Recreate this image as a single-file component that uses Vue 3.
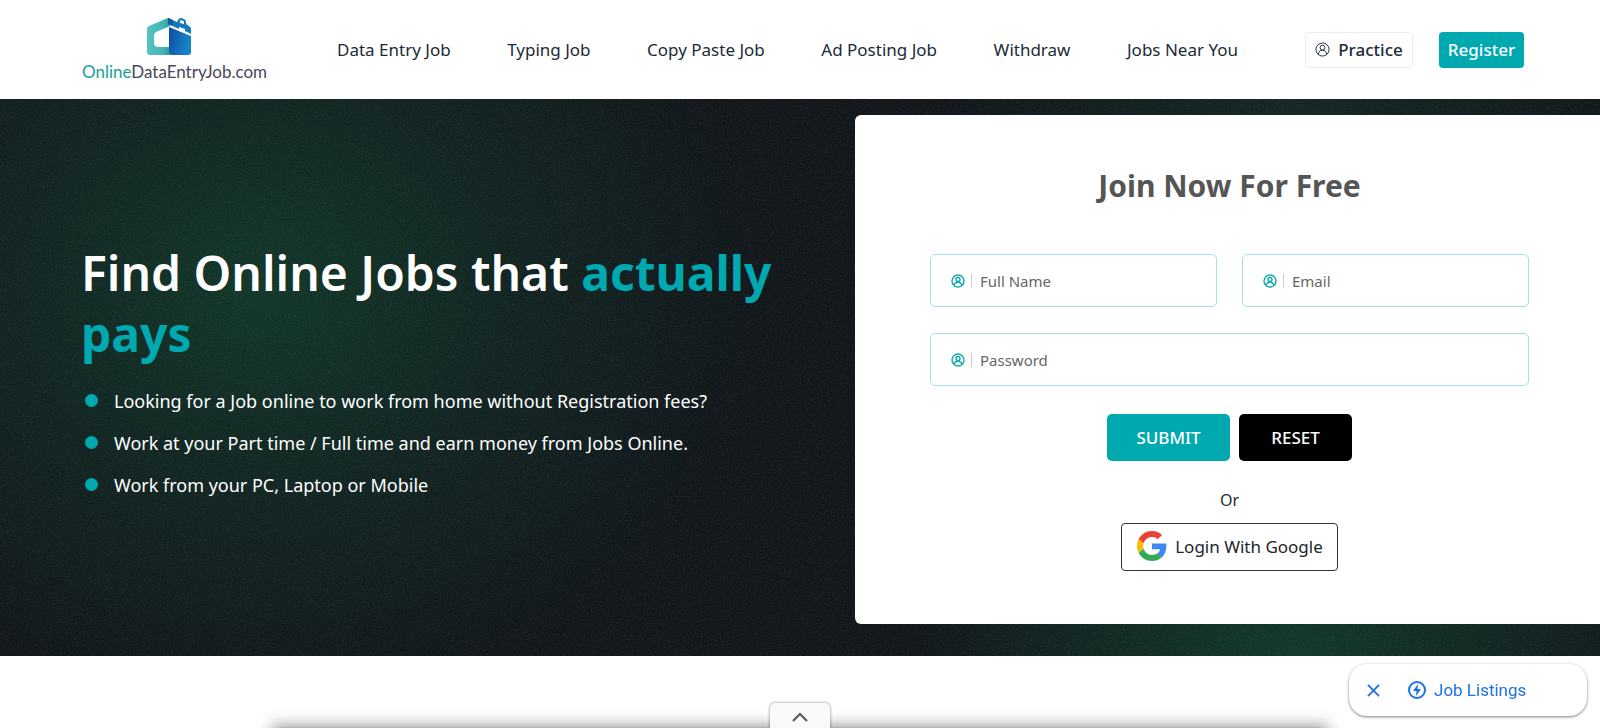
<script setup>
import { ref } from 'vue'

const navLinks = ['Data Entry Job', 'Typing Job', 'Copy Paste Job', 'Ad Posting Job', 'Withdraw', 'Jobs Near You']
const points = [
  'Looking for a Job online to work from home without Registration fees?',
  'Work at your Part time / Full time and earn money from Jobs Online.',
  'Work from your PC, Laptop or Mobile',
]
const fields = [
  { id: 'name', label: 'Full Name', type: 'text' },
  { id: 'email', label: 'Email', type: 'email' },
  { id: 'password', label: 'Password', type: 'password' },
]
const form = ref({ name: '', email: '', password: '' })
</script>

<template>
  <div class="page">
    <header class="header">
      <a class="logo" href="#">
        <svg class="logo-mark" viewBox="0 0 58 38" aria-hidden="true">
          <defs>
            <linearGradient id="teal" x1="0" y1="0" x2="1" y2="0">
              <stop offset="0" stop-color="#55c4c3" />
              <stop offset="0.7" stop-color="#43b3b3" />
              <stop offset="1" stop-color="#2c9a9e" />
            </linearGradient>
            <linearGradient id="blue" x1="0" y1="0" x2="1" y2="0.3">
              <stop offset="0" stop-color="#0b4da3" />
              <stop offset="0.4" stop-color="#1463b0" />
              <stop offset="1" stop-color="#1585c8" />
            </linearGradient>
          </defs>
          <path fill="url(#teal)" fill-rule="evenodd" d="M22 0 3 8Q1 9 1 11V34Q1 37 4 37H24V29H12Q8 29 8 25V18Q8 15 10 14L24 8V0Z" />
          <path fill="url(#blue)" d="M23 9 45 18V34Q45 37 42 37H26Q23 37 23 34Z" />
          <path fill="#1478bd" fill-rule="evenodd" d="M22 0 31 4 32 2Q33 0 35 0L38 1Q40 2 40 4V6L43 8Q45 9 45 11V16L39 13V11L33 9V11L22 6ZM34 5 38 6V4Q38 3 37 3L35 2Q34 2 34 3Z" />
          <path fill="#0f5cab" d="M22 0 27 2V8L22 6Z" />
          <path fill="#fff" d="M33 9 39 12V15L33 13Z" />
        </svg>
        <span class="logo-text"><span class="logo-accent">Online</span>DataEntryJob.com</span>
      </a>
      <nav class="nav">
        <a v-for="link in navLinks" :key="link" href="#">{{ link }}</a>
      </nav>
      <a class="practice" href="#">
        <svg viewBox="0 0 16 16" aria-hidden="true" fill="none" stroke="currentColor">
          <circle cx="8" cy="8" r="7" />
          <circle cx="8" cy="6" r="2.6" />
          <path d="M3.6 13C4 10 5.500 8.800 8 8.800s4 1.200 4.400 4.200" />
        </svg>
        Practice
      </a>
      <a class="register" href="#">Register</a>
    </header>

    <main class="hero">
      <svg class="grain" aria-hidden="true">
        <filter id="noise">
          <feTurbulence type="fractalNoise" baseFrequency="0.7" numOctaves="2" />
          <feColorMatrix values="0 0 0 0 0.6  0 0 0 0 0.7  0 0 0 0 0.7  1 0 0 0 -0.35" />
        </filter>
        <rect width="100%" height="100%" filter="url(#noise)" />
      </svg>
      <section class="intro">
        <h1>Find Online Jobs that <span>actually</span> <span>pays</span></h1>
        <ul>
          <li v-for="point in points" :key="point">{{ point }}</li>
        </ul>
      </section>
      <form class="card" @submit.prevent>
        <h2>Join Now For Free</h2>
        <div class="fields">
          <div v-for="field in fields" :key="field.id" class="field" :class="field.id">
            <label :for="field.id" :aria-label="field.label">
              <svg viewBox="0 0 14 14" aria-hidden="true" fill="none" stroke="currentColor" stroke-width="1.4">
                <circle cx="7" cy="7" r="6" />
                <circle cx="7" cy="5.500" r="2" />
                <path d="M3 11.500C3.500 9 5 8.300 7 8.300s3.500.7 4 3.200" />
              </svg>
            </label>
            <input :id="field.id" v-model="form[field.id]" :type="field.type" :placeholder="field.label" />
          </div>
        </div>
        <div class="actions">
          <button class="submit" type="submit">SUBMIT</button>
          <button class="reset" type="reset">RESET</button>
        </div>
        <p class="or">Or</p>
        <button class="google" type="button">
          <svg viewBox="0 0 48 48" aria-hidden="true">
            <path fill="#EA4335" d="M24 9.500c3.540 0 6.710 1.220 9.210 3.600l6.850-6.850C35.900 2.380 30.470 0 24 0 14.620 0 6.510 5.380 2.560 13.220l7.980 6.190C12.430 13.720 17.740 9.500 24 9.500z" />
            <path fill="#4285F4" d="M46.980 24.550c0-1.570-.15-3.090-.38-4.550H24v9.020h12.940c-.58 2.960-2.260 5.480-4.780 7.180l7.730 6c4.510-4.180 7.090-10.360 7.090-17.650z" />
            <path fill="#FBBC05" d="M10.530 28.590c-.48-1.450-.76-2.990-.76-4.590s.27-3.140.76-4.590l-7.980-6.190C.92 16.460 0 20.120 0 24c0 3.880.92 7.540 2.560 10.780l7.970-6.190z" />
            <path fill="#34A853" d="M24 48c6.480 0 11.930-2.130 15.890-5.810l-7.730-6c-2.150 1.450-4.920 2.300-8.160 2.300-6.260 0-11.570-4.220-13.470-9.910l-7.980 6.190C6.510 42.620 14.620 48 24 48z" />
          </svg>
          Login With Google
        </button>
      </form>
    </main>

    <section class="below">
      <div class="panel"></div>
    </section>

    <button class="expand" type="button" aria-label="Expand">
      <svg viewBox="0 0 18 10" aria-hidden="true"><path d="M2 9 9 2l7 7" fill="none" stroke="#555" stroke-width="2" /></svg>
    </button>
    <aside class="listings">
      <button type="button" aria-label="Close">
        <svg viewBox="0 0 14 14" aria-hidden="true"><path d="M1 1l12 12M13 1 1 13" fill="none" stroke="currentColor" stroke-width="2" /></svg>
      </button>
      <a href="#">
        <svg viewBox="0 0 18 18" aria-hidden="true">
          <circle cx="9" cy="9" r="8" fill="none" stroke="currentColor" stroke-width="2" />
          <path d="M10 3 5 10h3.500L8 15l5-7H9.500Z" fill="currentColor" />
        </svg>
        Job Listings
      </a>
    </aside>
  </div>
</template>

<style>
body {
  margin: 0;
}
</style>

<style scoped>
.page {
  min-height: 100vh;
  display: flex;
  flex-direction: column;
  background: #fff;
  color: #1b2a38;
  font-family: "Noto Sans", sans-serif;
}
a {
  color: inherit;
  text-decoration: none;
}
button {
  cursor: pointer;
  font-family: inherit;
}
.header {
  display: flex;
  align-items: center;
  height: 99px;
  padding: 0 76px 0 82px;
}
.logo {
  display: flex;
  flex-direction: column;
  align-items: center;
  gap: 6px;
  width: 185px;
}
.logo-mark {
  width: 58px;
  height: 38px;
}
.logo-text {
  font: 17px/20px Lato, sans-serif;
  color: #4a4558;
  white-space: nowrap;
}
.logo-accent {
  color: #1ba09d;
}
.nav {
  flex: 1;
  display: flex;
  justify-content: space-between;
  margin: 0 67px 0 70px;
  font-size: 17px;
  line-height: 24px;
  white-space: nowrap;
}
.practice,
.register {
  box-sizing: border-box;
  display: flex;
  align-items: center;
  justify-content: center;
  height: 36px;
  border-radius: 4px;
  font-size: 17px;
  font-weight: 500;
}
.practice {
  gap: 8px;
  width: 108px;
  margin-right: 26px;
  border: 1px solid #e6efef;
}
.practice svg {
  width: 15px;
  height: 15px;
}
.register {
  width: 85px;
  background: #00a8af;
  color: #fff;
}
.hero {
  position: relative;
  display: grid;
  grid-template-columns: 855fr 745fr;
  align-items: center;
  padding: 16px 0 32px;
  background:
    radial-gradient(ellipse 500px 420px at 260px 190px, rgba(17, 60, 42, 0.85), rgba(17, 52, 40, 0.5) 45%, transparent),
    radial-gradient(ellipse 380px 240px at 1290px 100%, rgba(17, 62, 44, 0.85), transparent),
    radial-gradient(ellipse 350px 300px at 1290px 0, rgba(20, 44, 38, 0.7), transparent),
    #10151a;
}
.grain {
  position: absolute;
  inset: 0;
  width: 100%;
  height: 100%;
  opacity: 0.15;
}
.intro {
  position: relative;
  padding: 8px 60px 0 81px;
  color: #fff;
}
h1 {
  margin: 0 0 16px;
  font-size: 48px;
  line-height: 61px;
  font-weight: 600;
}
h1 span {
  color: #00a8af;
  font-weight: 700;
}
ul {
  margin: 0;
  padding: 0;
  list-style: none;
}
li {
  display: flex;
  align-items: center;
  gap: 16px;
  padding-left: 4px;
  font-size: 18px;
  line-height: 42px;
}
li::before {
  content: "";
  width: 13px;
  height: 13px;
  border-radius: 50%;
  background: #00a8af;
}
.card {
  position: relative;
  display: flex;
  flex-direction: column;
  align-items: center;
  padding: 51px 71px 53px 75px;
  border-radius: 6px 0 0 6px;
  background: #fff;
}
h2 {
  margin: 0 0 48px;
  color: #555;
  font-size: 30px;
  line-height: 40px;
  font-weight: 700;
}
.fields {
  align-self: stretch;
  display: grid;
  grid-template-columns: 1fr 1fr;
  gap: 26px 25px;
}
.field {
  display: flex;
  align-items: center;
  height: 51px;
  padding-left: 20px;
  border: 1px solid #a6e1e3;
  border-radius: 5px;
}
.password {
  grid-column: 1 / -1;
}
label {
  display: flex;
  padding-right: 6px;
  border-right: 1px solid #ccc;
  color: #12a9af;
}
label svg {
  width: 14px;
  height: 14px;
}
input {
  flex: 1;
  min-width: 0;
  padding: 0 8px;
  border: 0;
  outline: 0;
  background: none;
  font: 15px/24px "Noto Sans", sans-serif;
}
input::placeholder {
  color: #666;
  opacity: 1;
}
.actions {
  display: flex;
  gap: 9px;
  margin-top: 28px;
}
.actions button {
  height: 47px;
  border: 0;
  border-radius: 5px;
  color: #fff;
  font-size: 17px;
  font-weight: 500;
}
.submit {
  width: 123px;
  background: #00a8af;
}
.reset {
  width: 113px;
  background: #000;
}
.or {
  margin: 27px 0 11px;
  font-size: 16px;
  line-height: 24px;
}
.google {
  display: flex;
  align-items: center;
  gap: 8px;
  height: 48px;
  padding: 0 14px 2px 15px;
  border: 1px solid #333;
  border-radius: 4px;
  background: #fff;
  color: #212529;
  font-size: 17px;
  white-space: nowrap;
}
.google svg {
  width: 30px;
  height: 30px;
}
.below {
  flex: 1;
  display: flex;
  align-items: flex-end;
  justify-content: center;
  overflow: hidden;
}
.panel {
  width: 65%;
  height: 1px;
  background: #b4b4b4;
  box-shadow: 0 8px 16px 8px rgba(0, 0, 0, 0.5);
}
.expand {
  position: fixed;
  bottom: 0;
  left: 50%;
  width: 60px;
  height: 25px;
  margin-left: -30px;
  padding: 3px 0 0;
  border: 0;
  border-radius: 5px 5px 0 0;
  background: #fafafa;
  box-shadow: 0 0 3px rgba(0, 0, 0, 0.5);
}
.expand svg {
  width: 18px;
  height: 10px;
}
.listings {
  position: fixed;
  right: 13px;
  bottom: 12px;
  display: flex;
  align-items: center;
  gap: 28px;
  box-sizing: border-box;
  width: 238px;
  height: 52px;
  padding-left: 18px;
  border-radius: 18px;
  background: #fff;
  box-shadow: 0 1px 3px rgba(0, 0, 0, 0.5);
  color: #1a73e8;
  font: 17px/24px Roboto, sans-serif;
}
.listings button {
  display: flex;
  padding: 0;
  border: 0;
  background: none;
  color: inherit;
}
.listings button svg {
  width: 13px;
  height: 13px;
}
.listings a {
  display: flex;
  align-items: center;
  gap: 8px;
}
.listings a svg {
  width: 18px;
  height: 18px;
}
</style>
